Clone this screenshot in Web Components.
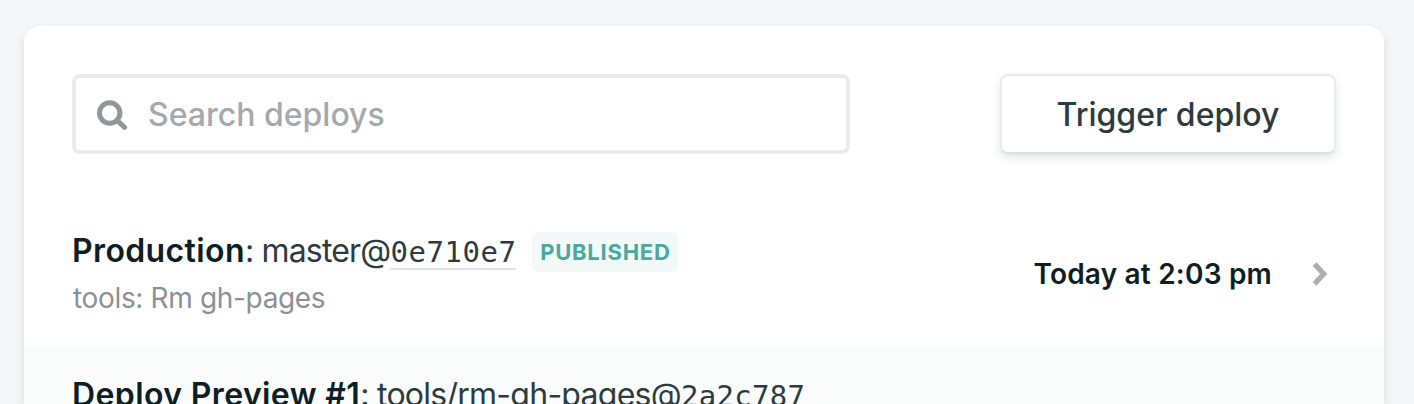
<!DOCTYPE html>
<html lang="en">
<head>
<meta charset="utf-8">
<title>Deploys</title>
<style>
html,body{margin:0;height:404px;overflow:hidden;background:#f5f6f8}
body{font-family:Inter,"Noto Sans",sans-serif;color:#2d3b41}
</style>
</head>
<body>
<deploy-card>
  <search-field slot="tools">Search deploys</search-field>
  <action-button slot="tools">Trigger deploy</action-button>
  <deploy-row>
    <deploy-title><b slot="context">Production</b>master@<commit-hash slot="hash" linked>0e710e7</commit-hash><status-badge slot="badge">PUBLISHED</status-badge></deploy-title>
    <span slot="message">tools: Rm gh-pages</span>
    <span slot="time">Today at 2:03 pm</span>
  </deploy-row>
  <deploy-row shaded>
    <deploy-title style="--branch-spacing:-.74px;--hash-spacing:.3px"><b slot="context">Deploy Preview #1</b>tools/rm-gh-pages@<commit-hash slot="hash">2a2c787</commit-hash></deploy-title>
  </deploy-row>
</deploy-card>
<script>
const define = (name, html) => {
  const template = document.createElement('template');
  template.innerHTML = html;
  customElements.define(name, class extends HTMLElement {
    constructor() {
      super();
      this.attachShadow({mode: 'open'}).append(template.content.cloneNode(true));
    }
  });
};

define('deploy-card', `<style>
:host{display:block;box-sizing:border-box;margin:26px 30px 0 24px;height:378px;background:#fff;border-radius:16px 16px 0 0;box-shadow:0 4px 8px rgba(14,30,37,.12)}
header{display:flex;justify-content:space-between;padding:48px 48px}
</style><header><slot name="tools"></slot></header><main><slot></slot></main>`);

define('search-field', `<style>
:host{display:flex;align-items:center;box-sizing:border-box;width:778px;height:80px;border:4px solid #e9ebeb;border-radius:8px;background:#fff;padding-left:20px;color:#a3a9ac;font-size:32px;font-weight:500;letter-spacing:0}
svg{width:32px;height:32px;margin-right:20px}
</style><svg viewBox="0 0 32 32" fill="none" stroke="#90979b"><circle cx="13.7" cy="15" r="10.2" stroke-width="5"/><path d="M21.5 22.8 28.6 29.3" stroke-width="5" stroke-linecap="round"/></svg><slot></slot>`);

define('action-button', `<style>
:host{display:flex;align-items:center;justify-content:center;box-sizing:border-box;width:336px;height:80px;border:2px solid #e9ebeb;border-bottom-color:#dfe1e2;border-radius:8px;background:#fff;box-shadow:0 4px 8px rgba(14,30,37,.12);font-size:32px;font-weight:500}
</style><slot></slot>`);

define('deploy-row', `<style>
:host{display:flex;box-sizing:border-box;height:144px;padding:24px 48px;align-items:center;justify-content:space-between}
:host([shaded]){height:58px;background:#fafcfb;align-items:flex-start}
.info{display:flex;flex-direction:column;height:96px}
:host([shaded]) .info{height:50px}
.message{height:40px;margin-top:2px;padding-left:1px;line-height:40px;font-size:28px;letter-spacing:-.34px;color:#8b9195}
:host([shaded]) .message{display:none}
.side{display:flex;align-items:center;font-size:28px;font-weight:600;letter-spacing:.2px;color:#0e1e25}
svg{width:24px;height:28px;margin:0 4px 0 36px}
:host([shaded]) .side{display:none}
</style><div class="info"><slot></slot><div class="message"><slot name="message"></slot></div></div><div class="side"><slot name="time"></slot><svg viewBox="0 0 24 28"><path d="M4.7 6 8.5 2.3 19.3 14 8.5 25.7 4.7 22 12.2 14z" fill="#a9afb2"/></svg></div>`);

define('deploy-title', `<style>
:host{display:flex;height:50px;align-items:center;white-space:pre;font-size:32px}
::slotted(b){font-weight:600;letter-spacing:.38px;color:#0e1e25;margin-top:-2px}
.branch{letter-spacing:var(--branch-spacing,-.82px);margin-top:-2px}
</style><slot name="context"></slot><span class="branch">: <slot></slot></span><slot name="hash"></slot><slot name="badge"></slot>`);

define('commit-hash', `<style>
:host{display:block;box-sizing:border-box;height:38px;line-height:40px;font-family:"DejaVu Sans Mono",monospace;font-size:29px;letter-spacing:var(--hash-spacing,.54px);border-bottom:2px solid transparent}
:host([linked]){border-color:#e0e2e3}
</style><slot></slot>`);

define('status-badge', `<style>
:host{display:flex;align-items:center;justify-content:center;box-sizing:border-box;width:146px;height:40px;margin:2px 0 0 16px;border-radius:6px;background:#f3f9f9;color:#4aa99e;font-size:22px;font-weight:700;letter-spacing:.75px}
</style><slot></slot>`);
</script>
</body>
</html>
